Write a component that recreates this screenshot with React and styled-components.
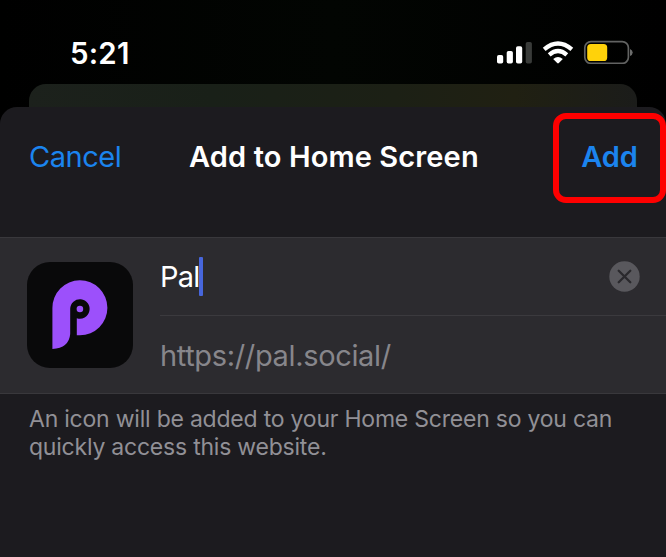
import React from "react";
import styled, { createGlobalStyle } from "styled-components";

const GlobalStyle = createGlobalStyle`
  * { box-sizing: border-box; }
  body { margin: 0; background: #020402; }
`;

const Screen = styled.main`
  width: 666px;
  height: 557px;
  display: flex;
  flex-direction: column;
  overflow: hidden;
  background: linear-gradient(90deg, #000, #020502 50%, #000);
  font-family: Inter, "Liberation Sans", sans-serif;
  color: #fff;
`;

const StatusBar = styled.header`
  height: 84px;
  flex: none;
  display: flex;
  justify-content: space-between;
  padding: 36px 33px 0 70px;
`;

const Clock = styled.time`
  font-size: 29.5px;
  line-height: 34px;
  font-weight: 600;
  letter-spacing: 0.2px;
`;

const StatusIcons = styled.svg`
  width: 136px;
  height: 24px;
  margin-top: 4px;
`;

const BackCard = styled.div`
  height: 23px;
  flex: none;
  margin: 0 29px;
  border-radius: 17px 17px 0 0;
  background: linear-gradient(90deg, #1c211c, #192018 30%, #1c2015 60%, #202012 80%, #1b1c1a);
`;

const Sheet = styled.section`
  flex: 1;
  border-radius: 17px 17px 0 0;
  background: #1c1b1f;
`;

const NavBar = styled.nav`
  height: 130px;
  display: grid;
  grid-template-columns: 189px 1fr 113px;
  align-items: start;
  padding-top: 6px;
`;

const NavButton = styled.button`
  appearance: none;
  border: 0;
  background: none;
  padding: 0;
  font-family: inherit;
  color: #1b84ee;
  font-size: 29px;
  line-height: 36px;
`;

const CancelButton = styled(NavButton)`
  margin: 26px 0 0 29px;
  justify-self: start;
  letter-spacing: -0.45px;
`;

const Title = styled.h1`
  margin: 26px 0 0;
  font-size: 29px;
  line-height: 36px;
  font-weight: 600;
  letter-spacing: 0.12px;
  white-space: nowrap;
`;

const AddButton = styled(NavButton)`
  width: 113px;
  height: 90px;
  border: 6px solid #fe0000;
  border-radius: 13px;
  font-weight: 600;
  padding-bottom: 3px;
  letter-spacing: -0.2px;
`;

const Form = styled.div`
  height: 157px;
  display: grid;
  grid-template-columns: 160px 1fr;
  background: #2c2b2f;
  border-top: 1px solid #39383c;
  border-bottom: 1px solid #39383c;
`;

const AppIcon = styled.svg`
  width: 106px;
  height: 106px;
  margin: 24px 0 0 27px;
`;

const Fields = styled.div`
  display: grid;
  grid-template-rows: 78px 1fr;
`;

const Field = styled.div`
  display: flex;
  align-items: center;
  font-size: 29px;
  line-height: 36px;
`;

const NameField = styled(Field)`
  border-bottom: 1px solid #3b3a3e;
  padding-right: 26px;
  letter-spacing: -0.8px;
`;

const UrlField = styled(Field)`
  color: #87868b;
  letter-spacing: -0.35px;
  padding-top: 2px;
`;

const Caret = styled.span`
  width: 4px;
  height: 39px;
  border-radius: 1px;
  background: #4766dc;
`;

const ClearIcon = styled.svg`
  width: 31px;
  height: 31px;
  margin-left: auto;
`;

const Note = styled.p`
  margin: 11px 0 0 29px;
  color: #919096;
  font-size: 23px;
  line-height: 28px;
  letter-spacing: -0.22px;
`;

const NoteLine = styled.span`
  display: block;
  white-space: nowrap;
`;

export default function App() {
  return (
    <Screen>
      <GlobalStyle />
      <StatusBar>
        <Clock>5:21</Clock>
        <StatusIcons viewBox="497 40 136 24">
          <g fill="#fff">
            <rect x="497" y="55" width="6.2" height="8.5" rx="1.8" />
            <rect x="506.7" y="51" width="6.2" height="12.5" rx="1.8" />
            <rect x="516" y="46.3" width="6.2" height="17.2" rx="1.8" />
            <rect x="525.7" y="42" width="6.2" height="21.5" rx="1.8" fill="#393b39" />
          </g>
          <g fill="none" stroke="#fff" strokeWidth="4.3">
            <path d="M544.2 49.4Q558 37.7 571.8 49.4" />
            <path d="M549.2 54.9Q558 47.3 566.8 54.9" />
          </g>
          <path d="M553.2 59.1Q558 54.9 562.8 59.1L558.8 63.1Q558 63.8 557.2 63.1Z" fill="#fff" />
          <rect x="584.8" y="41.6" width="43.6" height="21.8" rx="6.2" fill="none" stroke="#626362" strokeWidth="1.7" />
          <rect x="587.2" y="44" width="20" height="17" rx="3.6" fill="#ffd20a" />
          <path d="M630 49Q632.7 50 632.7 52.5T630 56Z" fill="#6b6c6b" />
        </StatusIcons>
      </StatusBar>
      <BackCard />
      <Sheet>
        <NavBar>
          <CancelButton>Cancel</CancelButton>
          <Title>Add to Home Screen</Title>
          <AddButton>Add</AddButton>
        </NavBar>
        <Form>
          <AppIcon viewBox="0 0 106 106">
            <rect width="106" height="106" rx="23" fill="#09090a" />
            <path
              d="M25.4 87V46A27.5 27.5 0 1 1 52.9 73.3H49.8V56.2A9.7 9.7 0 1 0 43.2 47V72Q42 86 25.4 87Z"
              fill="#9c50fb"
            />
            <circle cx="52.9" cy="47" r="3.3" fill="#9c50fb" />
          </AppIcon>
          <Fields>
            <NameField>
              <span>Pal</span>
              <Caret />
              <ClearIcon viewBox="0 0 31 31">
                <circle cx="15.5" cy="15.5" r="15.2" fill="#59585d" />
                <path d="M9.7 9.7 21.3 21.3M21.3 9.7 9.7 21.3" stroke="#2a292d" strokeWidth="2.3" strokeLinecap="round" />
              </ClearIcon>
            </NameField>
            <UrlField>https://pal.social/</UrlField>
          </Fields>
        </Form>
        <Note>
          <NoteLine>An icon will be added to your Home Screen so you can</NoteLine>
          <NoteLine>quickly access this website.</NoteLine>
        </Note>
      </Sheet>
    </Screen>
  );
}
